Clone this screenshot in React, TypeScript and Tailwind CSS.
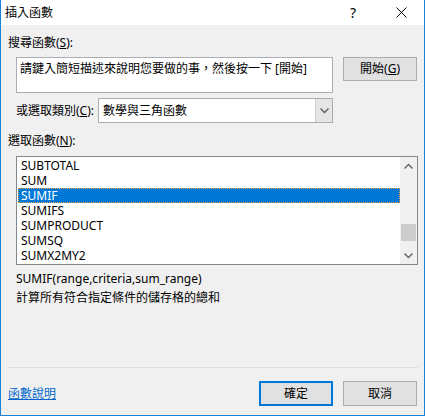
import React from "react";

const FONT = { fontFamily: '"Noto Sans", "Noto Sans CJK TC", sans-serif' };

const items = ["SUBTOTAL", "SUM", "SUMIF", "SUMIFS", "SUMPRODUCT", "SUMSQ", "SUMX2MY2"];

function Chevron({ up }: { up?: boolean }) {
    return (
        <svg width="9" height="6" viewBox="0 0 9 6" className="block">
            <path
                d={up ? "M0.5 5.5 L4.5 1.5 L8.5 5.5" : "M0.5 0.5 L4.5 4.5 L8.5 0.5"}
                fill="none"
                stroke="#606060"
                strokeWidth="1.4"
            />
        </svg>
    );
}

export default function App() {
    return (
        <div
            className="w-[425px] h-[416px] bg-[#f0f0f0] border-x border-b border-[#1883d7] flex flex-col text-[12px] text-black overflow-hidden"
            style={FONT}
        >
            {/* Title bar */}
            <div className="h-[25px] bg-white flex items-center pl-[4px] shrink-0">
                <span className="leading-none">插入函數</span>
                <span className="ml-auto mr-[40px] text-[14px] leading-none">?</span>
                <svg width="11" height="11" viewBox="0 0 11 11" className="mr-[17px]">
                    <path d="M0.5 0.5 L10.5 10.5 M10.5 0.5 L0.5 10.5" stroke="#000" strokeWidth="1" />
                </svg>
            </div>

            {/* Body */}
            <div className="flex-1 flex flex-col pl-[7px] pr-[6px]">
                <div className="mt-[10px] h-[16px] leading-[16px]">
                    搜尋函數(<span className="underline">S</span>):
                </div>

                <div className="mt-[6px] flex items-start">
                    <div className="ml-[8px] w-[317px] h-[36px] bg-white border border-[#abadb3] px-[3px] pt-[3px] leading-[16px]">
                        請鍵入簡短描述來說明您要做的事，然後按一下 [開始]
                    </div>
                    <button className="ml-[10px] w-[74px] h-[24px] bg-[#e1e1e1] border border-[#adadad] leading-none">
                        開始(<span className="underline">G</span>)
                    </button>
                </div>

                <div className="mt-[5px] flex items-center">
                    <span className="ml-[8px] w-[82px] leading-[16px]">
                        或選取類別(<span className="underline">C</span>):
                    </span>
                    <div className="w-[235px] h-[25px] bg-white border border-[#acacac] flex items-stretch">
                        <span className="flex-1 pl-[4px] flex items-center">數學與三角函數</span>
                        <span className="w-[17px] bg-[#e5e5e5] border-l border-[#cfcfcf] flex items-center justify-center">
                            <Chevron />
                        </span>
                    </div>
                </div>

                <div className="mt-[10px] h-[16px] leading-[16px]">
                    選取函數(<span className="underline">N</span>):
                </div>

                {/* List box */}
                <div className="mt-[7px] ml-[8px] w-[402px] h-[109px] bg-white border border-[#828790] flex">
                    <div className="flex-1 pl-[1px] pt-[1px] flex flex-col">
                        {items.map((it) => (
                            <div
                                key={it}
                                className={
                                    it === "SUMIF"
                                        ? "h-[15px] leading-[13px] pl-[2px] bg-[#0078d7] text-white border border-dotted border-[#f0a040]"
                                        : "h-[15px] leading-[15px] pl-[3px]"
                                }
                            >
                                {it}
                            </div>
                        ))}
                    </div>
                    <div className="w-[17px] bg-[#f0f0f0] flex flex-col items-center">
                        <div className="h-[17px] flex items-center justify-center">
                            <Chevron up />
                        </div>
                        <div className="flex-1 w-full flex flex-col">
                            <div className="mt-[50px] mx-[1px] h-[17px] bg-[#cdcdcd]" />
                        </div>
                        <div className="h-[17px] flex items-center justify-center">
                            <Chevron />
                        </div>
                    </div>
                </div>

                <div className="mt-[4px] ml-[8px] leading-[19px]">SUMIF(range,criteria,sum_range)</div>
                <div className="ml-[8px] leading-[19px]">計算所有符合指定條件的儲存格的總和</div>

                <div className="mt-auto mr-[0px] h-px bg-[#dfdfdf]" />

                <div className="mt-[13px] mb-[9px] flex items-center">
                    <a className="text-[#0066cc] underline leading-none" href="#">函數說明</a>
                    <button className="ml-auto w-[74px] h-[25px] bg-[#e1e1e1] border-2 border-[#0078d7] leading-none">
                        確定
                    </button>
                    <button className="ml-[10px] mr-[1px] w-[74px] h-[25px] bg-[#e1e1e1] border border-[#adadad] leading-none">
                        取消
                    </button>
                </div>
            </div>
        </div>
    );
}
